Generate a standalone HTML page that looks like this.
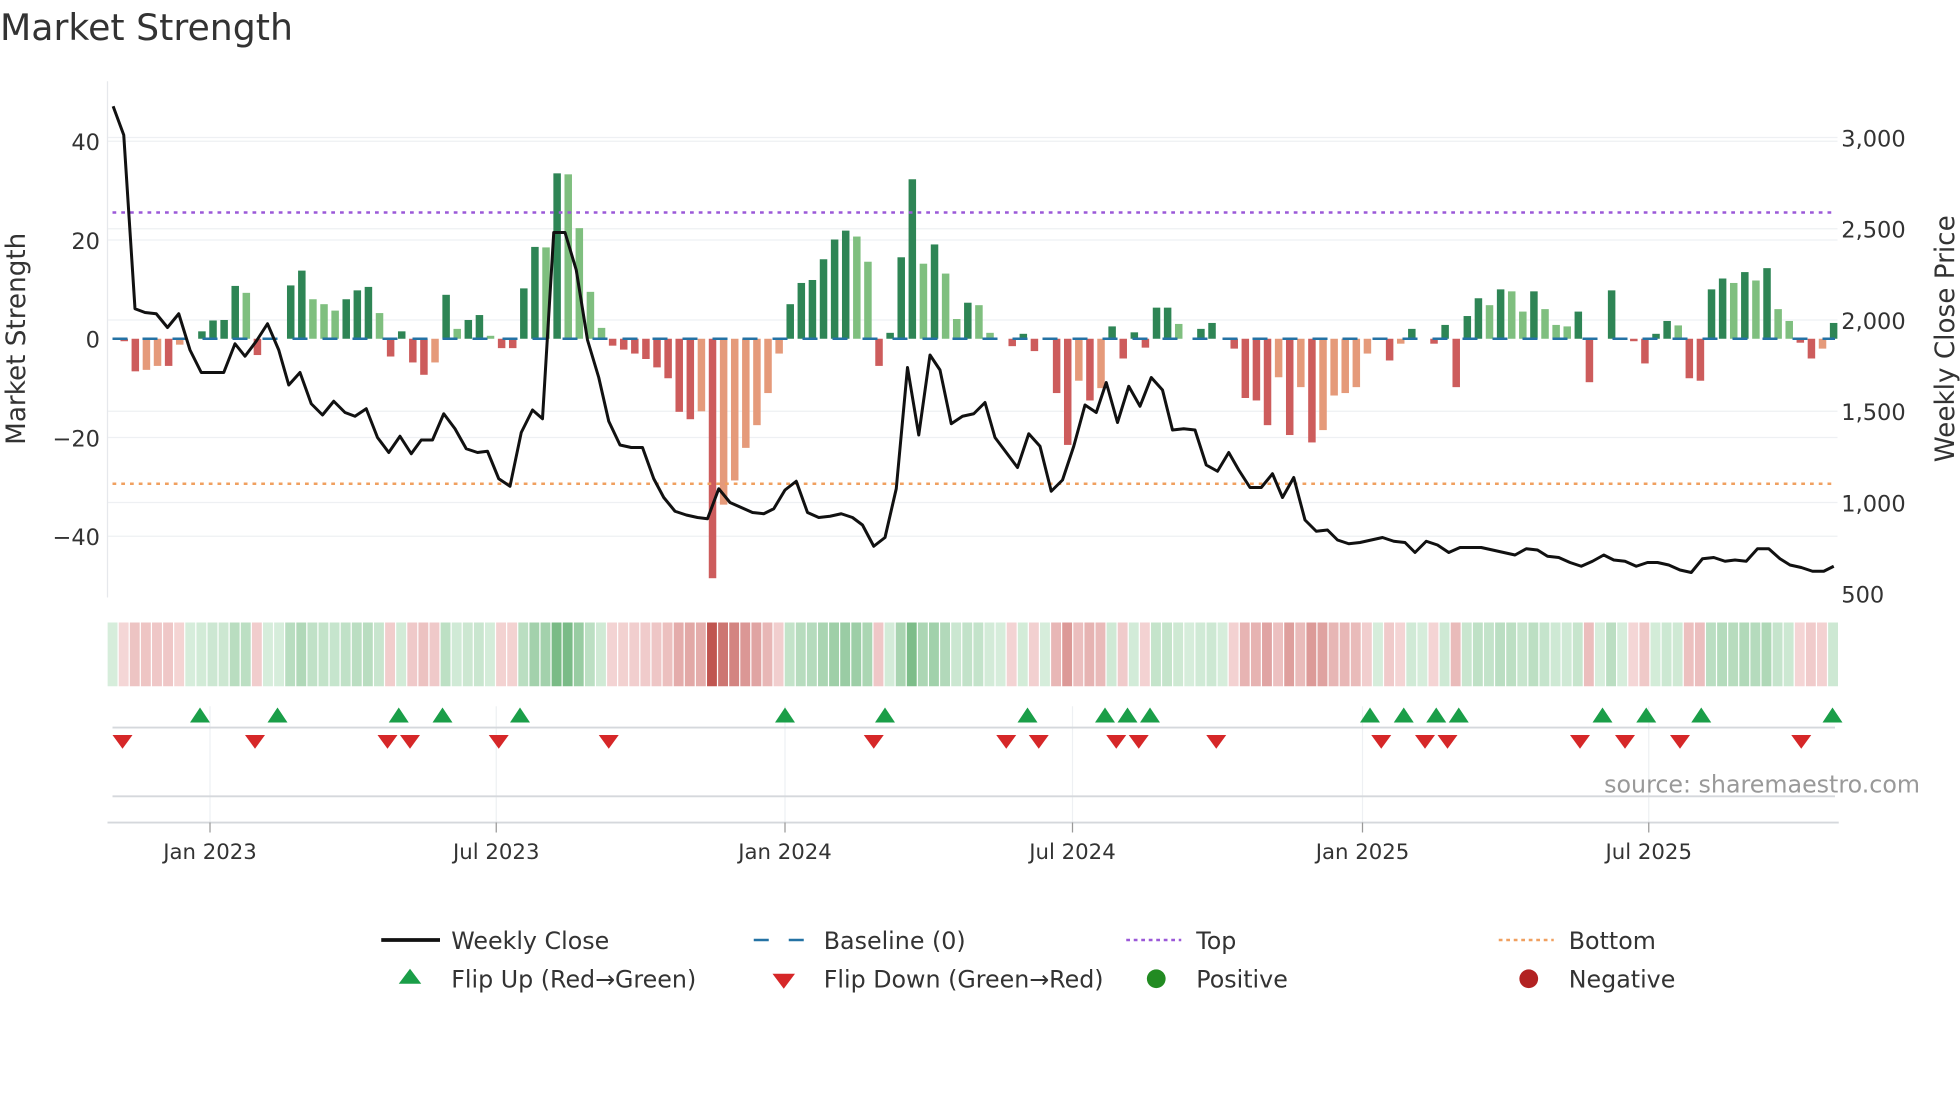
<!DOCTYPE html>
<html><head><meta charset="utf-8"><style>
html,body{margin:0;padding:0;background:#fff;}
svg{display:block;font-family:"DejaVu Sans","Liberation Sans",sans-serif;}
</style></head><body>
<svg id="s" width="1960" height="1102" viewBox="0 0 1568 881.6" xmlns="http://www.w3.org/2000/svg">
<text x="0" y="32" font-size="29" fill="#333">Market Strength</text>
<g stroke="#eef0f3" stroke-width="1">
<line x1="86" y1="113" x2="1470" y2="113"/><line x1="86" y1="192" x2="1470" y2="192"/>
<line x1="86" y1="350" x2="1470" y2="350"/><line x1="86" y1="429" x2="1470" y2="429"/>
<line x1="86" y1="110" x2="1470" y2="110"/><line x1="86" y1="183" x2="1470" y2="183"/>
<line x1="86" y1="256" x2="1470" y2="256"/><line x1="86" y1="329" x2="1470" y2="329"/>
<line x1="86" y1="402" x2="1470" y2="402"/>
</g>
<line x1="86" y1="65" x2="86" y2="478" stroke="#e6e8ec" stroke-width="1"/>
<g font-size="18" fill="#333" text-anchor="end">
<text x="80" y="120">40</text><text x="80" y="199">20</text><text x="80" y="278">0</text>
<text x="80" y="357">−20</text><text x="80" y="436">−40</text>
</g>
<g font-size="18" fill="#333">
<text x="1473" y="117">3,000</text><text x="1473" y="190">2,500</text><text x="1473" y="263">2,000</text>
<text x="1473" y="336">1,500</text><text x="1473" y="409">1,000</text><text x="1473" y="482">500</text>
</g>
<text transform="translate(20,271) rotate(-90)" font-size="21" fill="#333" text-anchor="middle">Market Strength</text>
<text transform="translate(1563,271) rotate(-90)" font-size="21" fill="#333" text-anchor="middle">Weekly Close Price</text>
<g id="bars"></g>
<line x1="90" y1="271" x2="1468" y2="271" stroke="#2472a4" stroke-width="2" stroke-dasharray="12,12"/>
<line x1="90" y1="170" x2="1468" y2="170" stroke="#9b59d8" stroke-width="2" stroke-dasharray="3,4"/>
<line x1="90" y1="387" x2="1468" y2="387" stroke="#f0a060" stroke-width="2" stroke-dasharray="3,4"/>
<polyline id="ln" fill="none" stroke="#111" stroke-width="2.4" stroke-linejoin="round"/>
<g id="heat"></g>
<g stroke="#eef0f3" stroke-width="1">
<line x1="168" y1="565" x2="168" y2="658"/><line x1="397" y1="565" x2="397" y2="658"/>
<line x1="628" y1="565" x2="628" y2="658"/><line x1="858" y1="565" x2="858" y2="658"/>
<line x1="1090" y1="565" x2="1090" y2="658"/><line x1="1319" y1="565" x2="1319" y2="658"/>
</g>
<line x1="90" y1="582" x2="1468" y2="582" stroke="#d5d8dc" stroke-width="1.5"/>
<g id="flips"></g>
<line x1="90" y1="637" x2="1468" y2="637" stroke="#d5d8dc" stroke-width="1.5"/>
<line x1="86" y1="658" x2="1471" y2="658" stroke="#d5d8dc" stroke-width="1.5"/>
<g stroke="#999" stroke-width="1">
<line x1="168" y1="658" x2="168" y2="666"/><line x1="397" y1="658" x2="397" y2="666"/>
<line x1="628" y1="658" x2="628" y2="666"/><line x1="858" y1="658" x2="858" y2="666"/>
<line x1="1090" y1="658" x2="1090" y2="666"/><line x1="1319" y1="658" x2="1319" y2="666"/>
</g>
<g font-size="17" fill="#333" text-anchor="middle">
<text x="168" y="687">Jan 2023</text><text x="397" y="687">Jul 2023</text><text x="628" y="687">Jan 2024</text>
<text x="858" y="687">Jul 2024</text><text x="1090" y="687">Jan 2025</text><text x="1319" y="687">Jul 2025</text>
</g>
<text x="1536" y="634" font-size="19" fill="#999" text-anchor="end">source: sharemaestro.com</text>
<g font-size="19" fill="#333">
<line x1="305" y1="752" x2="352" y2="752" stroke="#111" stroke-width="3"/>
<text x="361" y="759">Weekly Close</text>
<line x1="603" y1="752" x2="647" y2="752" stroke="#2472a4" stroke-width="2" stroke-dasharray="12,16"/>
<text x="659" y="759">Baseline (0)</text>
<line x1="901" y1="752" x2="945" y2="752" stroke="#9b59d8" stroke-width="2" stroke-dasharray="3,3"/>
<text x="957" y="759">Top</text>
<line x1="1199" y1="752" x2="1243" y2="752" stroke="#f0a060" stroke-width="2" stroke-dasharray="3,3"/>
<text x="1255" y="759">Bottom</text>
<polygon points="328,775 337,787 319,787" fill="#1a9e48"/>
<text x="361" y="790">Flip Up (Red→Green)</text>
<polygon points="618,779 636,779 627,791" fill="#d62728"/>
<text x="659" y="790">Flip Down (Green→Red)</text>
<circle cx="925" cy="783" r="7.5" fill="#228b22"/>
<text x="957" y="790">Positive</text>
<circle cx="1223" cy="783" r="7.5" fill="#b22222"/>
<text x="1255" y="790">Negative</text>
</g>
</svg>
<script>
var V=[0,-0.5,-6.6,-6.3,-5.5,-5.5,-1.2,0,1.5,3.7,3.8,10.7,9.3,-3.3,0,0,10.8,13.8,8,7,5.7,8,9.8,10.5,5.2,-3.6,1.5,-4.8,-7.3,-4.8,8.9,2,3.8,4.8,0.6,-1.9,-1.9,10.2,18.6,18.5,33.5,33.3,22.4,9.5,2.2,-1.4,-2.2,-3,-4.1,-5.8,-8,-14.8,-16.3,-14.7,-48.5,-33.6,-28.7,-22.1,-17.5,-11,-3,7,11.3,11.9,16.1,20.1,21.9,20.7,15.6,-5.5,1.2,16.5,32.3,15.2,19.1,13.2,4,7.3,6.8,1.2,0,-1.5,1,-2.5,0,-11,-21.5,-8.5,-12.5,-10,2.5,-4,1.3,-1.8,6.3,6.3,3,0,2,3.2,0,-2,-12,-12.5,-17.5,-7.8,-19.5,-9.8,-21,-18.5,-11.5,-11,-9.8,-3,0,-4.4,-1,2,0,-1,2.8,-9.8,4.6,8.2,6.8,10,9.6,5.5,9.6,6,2.8,2.5,5.5,-8.8,0,9.8,0,-0.5,-5,1,3.6,2.7,-8,-8.5,10,12.2,11.3,13.5,11.8,14.3,6,3.6,-0.8,-4,-2,3.2];
var ns="http://www.w3.org/2000/svg",b=document.getElementById('bars'),h=document.getElementById('heat');
function el(t,a,p){var e=document.createElementNS(ns,t);for(var k in a)e.setAttribute(k,a[k]);p.appendChild(e);}
function mix(c1,c2,t){return 'rgb('+c1.map(function(v,i){return Math.round(v+(c2[i]-v)*t)}).join(',')+')';}
for(var i=0;i<V.length;i++){var v=V[i],x=90.5+8.88*i,p=i>0?V[i-1]:0,c;
 if(v>0)c=(v>=p)?'#2e8555':'#7fbf7f';else c=(v<=p)?'#cd5c5c':'#e59a7a';
 if(v!=0){var y=271-v*3.95;el('rect',{x:x-3,y:Math.min(y,271),width:6,height:Math.abs(v*3.95),fill:c},b);}
 var t=Math.min(Math.abs(v)/45,1),hc=v>=0?mix([214,237,219],[90,170,105],t):mix([245,215,215],[192,85,80],t);
 el('rect',{x:x-4.4,y:498,width:7.9,height:51,fill:hc},h);}
var L=[[90.5,85],[99,108],[108,247],[116,250],[125,251],[134,262],[143,251],[152,280],[161,298],[170,298],[179,298],[188,275],[196,285],[205,273],[214,259],[223,280],[231,308],[240,298],[249,323],[258,332],[267,321],[276,330],[284,333],[293,327],[302,350],[311,362],[320,349],[329,363],[337,352],[346,352],[355,331],[364,343],[373,359],[382,362],[390,361],[399,383],[408,389],[417,346],[426,328],[434,335],[443,186],[452,186],[461,216],[470,272],[479,302],[487,337],[496,356],[505,358],[514,358],[523,383],[531,398],[540,409],[549,412],[558,414],[566,415],[575,391],[584,402],[593,406],[602,410],[611,411],[619,407],[628,392],[637,385],[646,410],[655,414],[664,413],[673,411],[682,414],[690,420],[699,437],[708,430],[717,391],[726,294],[735,348],[744,284],[752,296],[761,339],[770,333],[779,331],[788,322],[796,350],[805,362],[814,374],[823,347],[832,357],[841,393],[850,384],[859,357],[868,324],[877,330],[885,306],[894,338],[903,309],[912,325],[921,302],[930,312],[938,344],[947,343],[956,344],[965,372],[974,377],[983,362],[991,376],[1000,390],[1009,390],[1018,379],[1026,398],[1035,382],[1044,416],[1053,425],[1062,424],[1070,432],[1079,435],[1088,434],[1097,432],[1106,430],[1115,433],[1124,434],[1132,442],[1141,433],[1150,436],[1159,442],[1168,438],[1176,438],[1185,438],[1194,440],[1203,442],[1212,444],[1221,439],[1230,440],[1238,445],[1247,446],[1256,450],[1265,453],[1274,449],[1283,444],[1291,448],[1300,449],[1309,453],[1318,450],[1326,450],[1335,452],[1344,456],[1353,458],[1362,447],[1371,446],[1380,449],[1388,448],[1397,449],[1406,439],[1415,439],[1424,447],[1432,452],[1441,454],[1450,457],[1459,457],[1467,453]];
document.getElementById('ln').setAttribute('points',L.map(function(q){return q.join(',')}).join(' '));
var f=document.getElementById('flips');
[160,222,319,354,416,628,708,822,884,902,920,1096,1123,1149,1167,1282,1317,1361,1466].forEach(function(x){el('polygon',{points:x+',566 '+(x+8)+',578 '+(x-8)+',578',fill:'#1a9e48'},f);});
[98,204,310,328,399,487,699,805,831,893,911,973,1105,1140,1158,1264,1300,1344,1441].forEach(function(x){el('polygon',{points:(x-8)+',588 '+(x+8)+',588 '+x+',599',fill:'#d62728'},f);});
</script>
</body></html>
